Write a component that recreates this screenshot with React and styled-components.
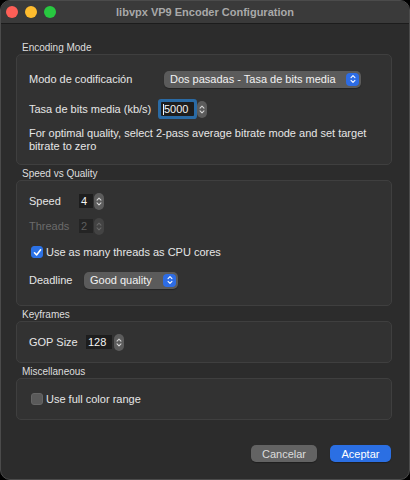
import React from "react";
import styled, { createGlobalStyle } from "styled-components";

const GlobalStyle = createGlobalStyle`
  html, body {
    margin: 0;
    padding: 0;
    background: #000;
  }
  body {
    font-family: "Liberation Sans", Arial, sans-serif;
    -webkit-font-smoothing: antialiased;
  }
`;

const Window = styled.div`
  width: 410px;
  height: 480px;
  box-sizing: border-box;
  border: 1px solid #4b4b4b;
  border-radius: 10px;
  overflow: hidden;
  background: #2c2c2c;
  display: flex;
  flex-direction: column;
`;

const TitleBar = styled.div`
  height: 23px;
  box-sizing: border-box;
  background: #3a3a3a;
  border-bottom: 1px solid #1c1c1c;
  display: grid;
  grid-template-columns: 1fr auto 1fr;
  align-items: center;
  padding: 0 5px;
`;

const Lights = styled.div`
  display: flex;
  gap: 7px;
`;

const Light = styled.span`
  width: 12px;
  height: 12px;
  border-radius: 50%;
  background: ${(p) => p.color};
`;

const Title = styled.div`
  font-size: 11px;
  font-weight: bold;
  color: #a9a9a9;
`;

const Content = styled.div`
  flex: 1;
  display: flex;
  flex-direction: column;
  gap: 3px;
  padding: 18px 17px 0 15px;
`;

const Section = styled.div`
  display: flex;
  flex-direction: column;
`;

const SectionLabel = styled.div`
  font-size: 10px;
  line-height: 12px;
  color: #dedede;
  padding-left: 6px;
`;

const Group = styled.div`
  background: #323232;
  border: 1px solid #3f3f3f;
  border-radius: 5px;
  padding: ${(p) => p.pad || "11px 12px"};
  display: flex;
  flex-direction: column;
`;

const Row = styled.div`
  display: flex;
  align-items: center;
  height: 18px;
  margin-top: ${(p) => p.mt || 0}px;
`;

const Label = styled.span`
  font-size: 11px;
  color: ${(p) => (p.disabled ? "#6b6b6b" : "#e6e6e6")};
  width: ${(p) => (p.w ? `${p.w}px` : "auto")};
  flex-shrink: 0;
  white-space: nowrap;
`;

const Help = styled.p`
  margin: 9px 0 0;
  font-size: 11px;
  line-height: 13px;
  color: #e6e6e6;
  max-width: 350px;
`;

const SelectBox = styled.div`
  width: ${(p) => p.w}px;
  height: 17px;
  box-sizing: border-box;
  background: #5b5b5b;
  border-radius: 5px;
  display: flex;
  align-items: center;
  justify-content: space-between;
  padding: 0 2px 0 6px;
  font-size: 11px;
  color: #f2f2f2;
  box-shadow: 0 1px 1px rgba(0, 0, 0, 0.3);
`;

const SelectArrow = styled.span`
  width: 13px;
  height: 13px;
  border-radius: 4px;
  background: #2d6ce4;
  display: flex;
  align-items: center;
  justify-content: center;
`;

const Spin = styled.div`
  display: flex;
  align-items: center;
  gap: ${(p) => p.gap || 1}px;
`;

const SpinField = styled.div`
  width: ${(p) => p.w}px;
  height: 14px;
  box-sizing: border-box;
  background: ${(p) => (p.disabled ? "#242424" : "#1d1d1d")};
  color: ${(p) => (p.disabled ? "#5e5e5e" : "#f4f4f4")};
  font-size: 11px;
  line-height: 14px;
  padding-left: 2px;
  box-shadow: ${(p) => (p.focused ? "0 0 0 3px #2a6aa4" : "none")};
  border-radius: ${(p) => (p.focused ? "1px" : "0")};
`;

const Caret = styled.span`
  display: inline-block;
  width: 1px;
  height: 11px;
  background: #f4f4f4;
  vertical-align: -2px;
`;

const Stepper = styled.span`
  width: 10px;
  height: 17px;
  border-radius: 5px;
  background: ${(p) => (p.disabled ? "#434343" : "#5c5c5c")};
  display: flex;
  align-items: center;
  justify-content: center;
`;

const CheckRow = styled.label`
  display: flex;
  align-items: center;
  gap: 3px;
  padding-left: 2px;
  font-size: 11px;
  color: #e6e6e6;
`;

const Box = styled.span`
  width: 12px;
  height: 12px;
  box-sizing: border-box;
  border-radius: 3px;
  background: ${(p) => (p.checked ? "#2c72e6" : "#5a5a5a")};
  border: 1px solid ${(p) => (p.checked ? "#2c72e6" : "#666")};
  display: flex;
  align-items: center;
  justify-content: center;
`;

const Footer = styled.div`
  display: flex;
  justify-content: flex-end;
  gap: 13px;
  margin-top: 22px;
  padding-right: 1px;
`;

const Button = styled.button`
  width: ${(p) => p.w}px;
  height: 17px;
  border: none;
  border-radius: 5px;
  padding: 0;
  font-family: inherit;
  font-size: 11px;
  color: ${(p) => (p.primary ? "#ffffff" : "#dcdcdc")};
  background: ${(p) => (p.primary ? "#2b6fe3" : "#636363")};
  box-shadow: 0 1px 1px rgba(0, 0, 0, 0.3);
`;

const Chevrons = ({ color = "#fff", w = 7, h = 11 }) => (
  <svg width={w} height={h} viewBox="0 0 7 11" fill="none">
    <path
      d="M1.2 4 L3.5 1.6 L5.8 4 M1.2 7 L3.5 9.4 L5.8 7"
      stroke={color}
      strokeWidth="1.2"
      strokeLinecap="round"
      strokeLinejoin="round"
    />
  </svg>
);

const Check = () => (
  <svg width="9" height="9" viewBox="0 0 9 9" fill="none">
    <path
      d="M1.5 4.8 L3.6 7 L7.6 1.8"
      stroke="#fff"
      strokeWidth="1.6"
      strokeLinecap="round"
      strokeLinejoin="round"
    />
  </svg>
);

const Select = ({ w, children }) => (
  <SelectBox w={w}>
    <span>{children}</span>
    <SelectArrow>
      <Chevrons w={6} h={10} />
    </SelectArrow>
  </SelectBox>
);

const SpinBox = ({ w, value, disabled, focused, gap }) => (
  <Spin gap={gap}>
    <SpinField w={w} disabled={disabled} focused={focused}>
      {focused && <Caret />}
      {value}
    </SpinField>
    <Stepper disabled={disabled}>
      <Chevrons color={disabled ? "#6a6a6a" : "#d8d8d8"} w={6} h={11} />
    </Stepper>
  </Spin>
);

const Checkbox = ({ checked, children }) => (
  <CheckRow>
    <Box checked={checked}>{checked && <Check />}</Box>
    {children}
  </CheckRow>
);

export default function App() {
  return (
    <>
      <GlobalStyle />
      <Window>
        <TitleBar>
          <Lights>
            <Light color="#fe5f57" />
            <Light color="#febc2e" />
            <Light color="#28c840" />
          </Lights>
          <Title>libvpx VP9 Encoder Configuration</Title>
          <span />
        </TitleBar>
        <Content>
          <Section>
            <SectionLabel>Encoding Mode</SectionLabel>
            <Group pad="15px 12px 11px">
              <Row>
                <Label w={135}>Modo de codificación</Label>
                <Select w={197}>Dos pasadas - Tasa de bits media</Select>
              </Row>
              <Row mt={12}>
                <Label w={132}>Tasa de bits media (kb/s)</Label>
                <SpinBox w={33} value="5000" focused gap={3} />
              </Row>
              <Help>
                For optimal quality, select 2-pass average bitrate mode and set
                target bitrate to zero
              </Help>
            </Group>
          </Section>

          <Section>
            <SectionLabel>Speed vs Quality</SectionLabel>
            <Group pad="11px 12px 16px">
              <Row>
                <Label w={50}>Speed</Label>
                <SpinBox w={14} value="4" />
              </Row>
              <Row mt={7}>
                <Label w={50} disabled>
                  Threads
                </Label>
                <SpinBox w={14} value="2" disabled />
              </Row>
              <Row mt={8}>
                <Checkbox checked>Use as many threads as CPU cores</Checkbox>
              </Row>
              <Row mt={10}>
                <Label w={55}>Deadline</Label>
                <Select w={94}>Good quality</Select>
              </Row>
            </Group>
          </Section>

          <Section>
            <SectionLabel>Keyframes</SectionLabel>
            <Group>
              <Row>
                <Label w={57}>GOP Size</Label>
                <SpinBox w={26} value="128" gap={2} />
              </Row>
            </Group>
          </Section>

          <Section>
            <SectionLabel>Miscellaneous</SectionLabel>
            <Group>
              <Row>
                <Checkbox>Use full color range</Checkbox>
              </Row>
            </Group>
          </Section>

          <Footer>
            <Button w={66}>Cancelar</Button>
            <Button w={61} primary>
              Aceptar
            </Button>
          </Footer>
        </Content>
      </Window>
    </>
  );
}
